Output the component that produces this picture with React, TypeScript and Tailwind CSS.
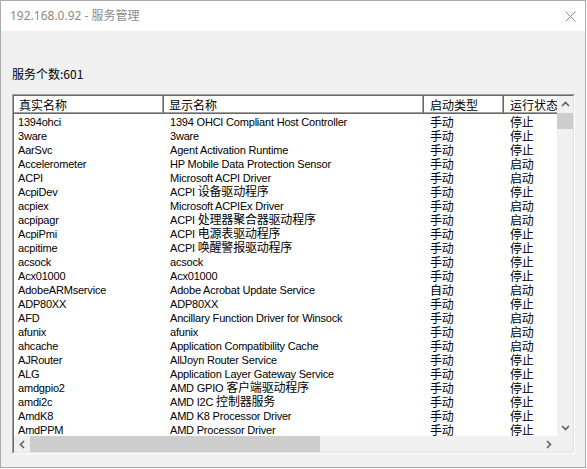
import React from "react"

type Row = [string, string, string, string]

const rows: Row[] = [
  ["1394ohci", "1394 OHCI Compliant Host Controller", "手动", "停止"],
  ["3ware", "3ware", "手动", "停止"],
  ["AarSvc", "Agent Activation Runtime", "手动", "停止"],
  ["Accelerometer", "HP Mobile Data Protection Sensor", "手动", "启动"],
  ["ACPI", "Microsoft ACPI Driver", "手动", "启动"],
  ["AcpiDev", "ACPI 设备驱动程序", "手动", "停止"],
  ["acpiex", "Microsoft ACPIEx Driver", "手动", "启动"],
  ["acpipagr", "ACPI 处理器聚合器驱动程序", "手动", "启动"],
  ["AcpiPmi", "ACPI 电源表驱动程序", "手动", "停止"],
  ["acpitime", "ACPI 唤醒警报驱动程序", "手动", "停止"],
  ["acsock", "acsock", "手动", "停止"],
  ["Acx01000", "Acx01000", "手动", "停止"],
  ["AdobeARMservice", "Adobe Acrobat Update Service", "自动", "启动"],
  ["ADP80XX", "ADP80XX", "手动", "停止"],
  ["AFD", "Ancillary Function Driver for Winsock", "手动", "启动"],
  ["afunix", "afunix", "手动", "启动"],
  ["ahcache", "Application Compatibility Cache", "手动", "启动"],
  ["AJRouter", "AllJoyn Router Service", "手动", "停止"],
  ["ALG", "Application Layer Gateway Service", "手动", "停止"],
  ["amdgpio2", "AMD GPIO 客户端驱动程序", "手动", "停止"],
  ["amdi2c", "AMD I2C 控制器服务", "手动", "停止"],
  ["AmdK8", "AMD K8 Processor Driver", "手动", "停止"],
  ["AmdPPM", "AMD Processor Driver", "手动", "停止"],
]

// 中文部分用 12px，英文用 11px
function Mixed({ text }: { text: string }) {
  const parts = text.split(/([\u3400-\u9fff]+)/)
  return (
    <>
      {parts.map((p, i) =>
        /[\u3400-\u9fff]/.test(p) ? (
          <span key={i} className="text-[12px] leading-[14px]">
            {p}
          </span>
        ) : (
          <span key={i}>{p}</span>
        )
      )}
    </>
  )
}

function Chevron({ dir }: { dir: "up" | "down" | "left" | "right" }) {
  const pts = {
    up: "1,6 4.5,2.5 8,6",
    down: "1,3 4.5,6.5 8,3",
    left: "6,1 2.5,4.5 6,8",
    right: "3,1 6.5,4.5 3,8",
  }[dir]
  return (
    <svg width="9" height="9" viewBox="0 0 9 9">
      <polyline points={pts} fill="none" stroke="#606060" strokeWidth="1.6" />
    </svg>
  )
}

const headCell =
  "h-[18px] shrink-0 bg-white border-r border-b border-[#696969] shadow-[inset_-1px_-1px_#a0a0a0,inset_1px_1px_#ffffff] text-[12px] leading-[17px] text-black whitespace-nowrap overflow-hidden"

const cjkCell = "w-[80px] shrink-0 pl-[6px] text-[12px] leading-[14px]"

export default function App() {
  return (
    <div className="w-[587px] h-[469px] bg-white overflow-hidden" style={{ fontFamily: '"Liberation Sans", "Noto Sans CJK SC", sans-serif' }}>
      <div className="w-[586px] h-[468px] border border-[#aaaaaa] bg-[#f0f0f0] flex flex-col">
        {/* 标题栏 */}
        <div className="h-[30px] bg-white flex items-center justify-between shrink-0">
          <span className="pl-[9px] text-[12px] text-[#8a8a8a]" style={{ fontFamily: '"Noto Sans", "Noto Sans CJK SC", sans-serif' }}>
            192.168.0.92 - 服务管理
          </span>
          <svg width="11" height="11" viewBox="0 0 11 11" className="mr-[9px]">
            <path d="M0.5 0.5 L10.5 10.5 M10.5 0.5 L0.5 10.5" stroke="#8a8a8a" strokeWidth="1" />
          </svg>
        </div>

        <div className="pl-[11px] flex flex-col">
          <div className="mt-[35px] h-[16px] leading-[16px] text-[12px] text-black" style={{ fontFamily: '"Noto Sans CJK SC", sans-serif' }}>
            服务个数:601
          </div>

          {/* 列表 */}
          <div className="mt-[12px] w-[563px] h-[360px] border border-t-[#a0a0a0] border-l-[#a0a0a0] border-b-white border-r-white">
            <div className="w-full h-full border border-t-[#696969] border-l-[#696969] border-b-[#e3e3e3] border-r-[#e3e3e3] bg-white flex flex-col">
              <div className="flex h-[340px]">
                <div className="flex-1 overflow-hidden flex flex-col">
                  <div className="flex" style={{ fontFamily: '"Noto Sans CJK SC", sans-serif' }}>
                    <div className={headCell + " w-[150px] pl-[5px]"}>真实名称</div>
                    <div className={headCell + " w-[260px] pl-[5px]"}>显示名称</div>
                    <div className={headCell + " w-[80px] pl-[6px]"}>启动类型</div>
                    <div className={headCell + " w-[80px] pl-[6px]"}>运行状态</div>
                  </div>
                  <div className="pt-[1px] text-[11px] tracking-[-0.2px] text-black">
                    {rows.map((r, i) => (
                      <div key={i} className="flex h-[14px] leading-[14px] whitespace-nowrap">
                        <div className="w-[150px] shrink-0 pl-[4px] overflow-hidden">{r[0]}</div>
                        <div className="w-[260px] shrink-0 pl-[6px] overflow-hidden">
                          <Mixed text={r[1]} />
                        </div>
                        <div className={cjkCell} style={{ fontFamily: '"Noto Sans CJK SC", sans-serif' }}>
                          {r[2]}
                        </div>
                        <div className={cjkCell} style={{ fontFamily: '"Noto Sans CJK SC", sans-serif' }}>
                          {r[3]}
                        </div>
                      </div>
                    ))}
                  </div>
                </div>
                {/* 竖滚动条 */}
                <div className="w-[16px] bg-[#f0f0f0] flex flex-col shrink-0">
                  <div className="h-[17px] flex items-center justify-center">
                    <Chevron dir="up" />
                  </div>
                  <div className="h-[16px] bg-[#cdcdcd]" />
                  <div className="flex-1" />
                  <div className="h-[17px] flex items-center justify-center">
                    <Chevron dir="down" />
                  </div>
                </div>
              </div>
              {/* 横滚动条 */}
              <div className="flex h-[16px] bg-[#f0f0f0]">
                <div className="w-[16px] flex items-center justify-center">
                  <Chevron dir="left" />
                </div>
                <div className="w-[290px] bg-[#cdcdcd]" />
                <div className="flex-1" />
                <div className="w-[17px] flex items-center justify-center">
                  <Chevron dir="right" />
                </div>
                <div className="w-[16px] bg-[#f0f0f0]" />
              </div>
            </div>
          </div>
        </div>
      </div>
    </div>
  )
}
